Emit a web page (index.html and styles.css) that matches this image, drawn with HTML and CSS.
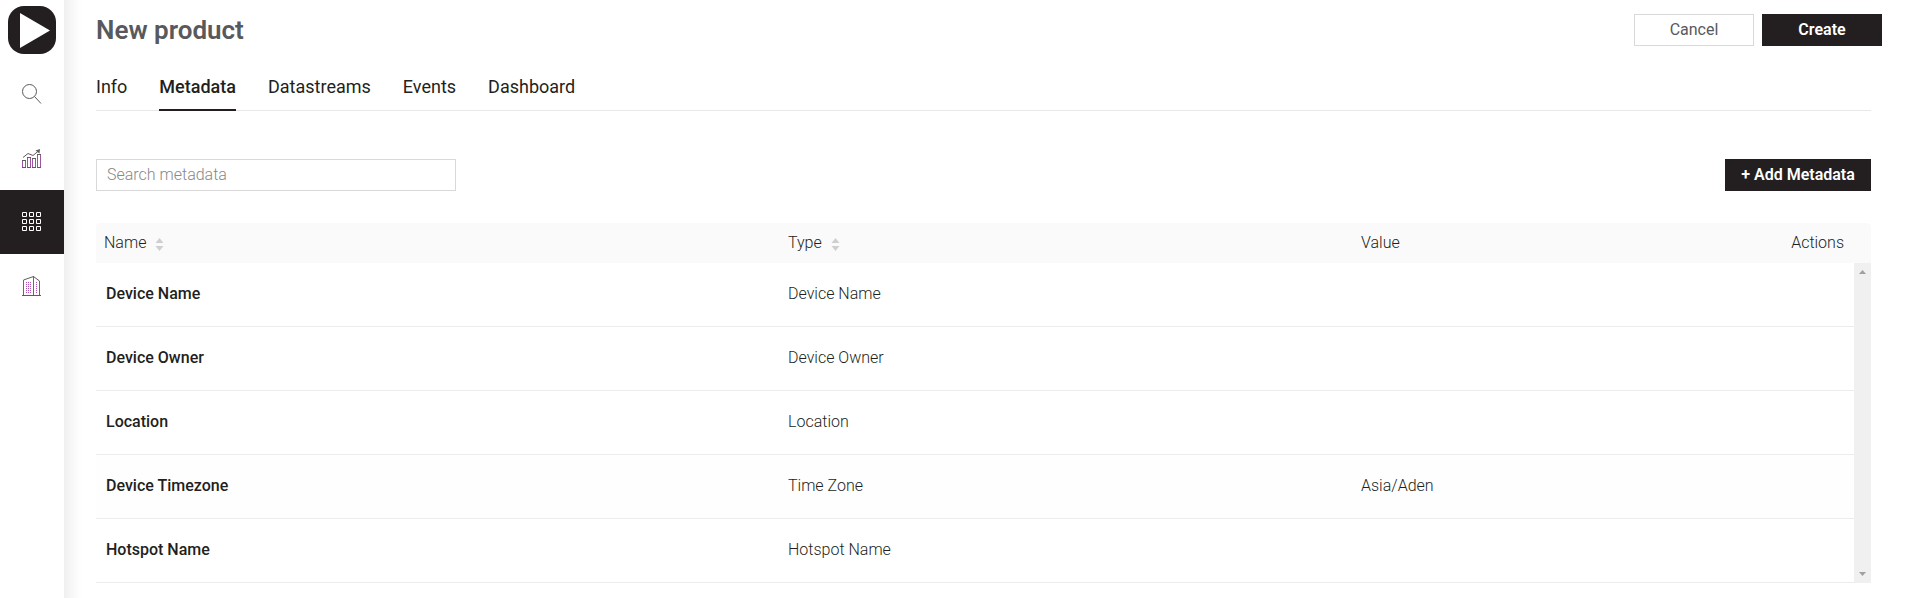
FILE: index.html
```html
<!DOCTYPE html>
<html lang="en">
<head>
<meta charset="utf-8">
<title>New product</title>
<link rel="stylesheet" href="styles.css">
</head>
<body>
<div class="app">
  <nav class="sidebar">
    <a class="logo"><svg width="48" height="48" viewBox="0 0 48 48"><rect width="48" height="48" rx="16" fill="#231f20"/><path d="M12 7L42 24.500 12 42Z" fill="#fff"/></svg></a>
    <a class="nav-item"><svg width="20" height="20" viewBox="0 0 20 20" fill="none" stroke="#5a5660"><circle cx="7.500" cy="7.500" r="7"/><path d="M12.500 12.500L19 19.500"/></svg></a>
    <a class="nav-item"><svg width="20" height="20" viewBox="0 0 20 20" fill="none"><path d="M.5 19V11.500M3.500 11.500V19M5.500 19V8.500M8.500 8.500V19M10.500 19V9.500M13.500 9.500V19M15.500 19V5.500M18.500 5.500V19" stroke="#a052a5"/><path d="M0 18.500h4M5 18.500h4M10 18.500h4M15 18.500h4M0 11.500h4M5 8.500h4M10 9.500h4M15 5.500h4M1 8.500L6 4.500 11 6.500 17 1.500" stroke="#5f5b5f"/><path d="M13.500 1.500L18 0 17.500 4.500Z" fill="#5f5b5f"/></svg></a>
    <a class="nav-item active"><svg width="20" height="20" viewBox="0 0 20 20" fill="none" stroke="#fff"><path d="M.5.500h4v4h-4zM7.500.500h4v4h-4zM14.500.500h4v4h-4zM.5 7.500h4v4h-4zM7.500 7.500h4v4h-4zM14.500 7.500h4v4h-4zM.5 14.500h4v4h-4zM7.500 14.500h4v4h-4zM14.500 14.500h4v4h-4z"/></svg></a>
    <a class="nav-item"><svg width="20" height="20" viewBox="0 0 20 20" fill="none"><path d="M1.500 19V4M11.500 0v19M17.500 19V5" stroke="#7d5a82"/><path d="M0 19.500h19M1.500 4L11.500.500 17.500 5" stroke="#5f5b5f"/><path d="M4.500 6v11M6.500 6v11M8.500 6v11M14.500 6v11" stroke="#b052b5" stroke-dasharray="1 1"/></svg></a>
  </nav>
  <main class="main">
    <header class="header">
      <h1 class="title">New product</h1>
      <div class="header-actions"><button class="btn">Cancel</button><button class="btn primary">Create</button></div>
    </header>
    <div class="tabs">
      <a class="tab">Info</a><a class="tab selected">Metadata</a><a class="tab">Datastreams</a><a class="tab">Events</a><a class="tab">Dashboard</a>
    </div>
    <div class="toolbar">
      <input class="search" placeholder="Search metadata">
      <button class="btn primary add">+ Add Metadata</button>
    </div>
    <section class="table">
      <div class="thead">
        <div class="cell name">Name<svg class="sorter" width="9" height="13" viewBox="0 0 9 13"><path d="M4.500 0L8.500 5h-8zM.5 8h8l-4 5z"/></svg></div>
        <div class="cell">Type<svg class="sorter" width="9" height="13" viewBox="0 0 9 13"><path d="M4.500 0L8.500 5h-8zM.5 8h8l-4 5z"/></svg></div>
        <div class="cell">Value</div>
        <div class="cell actions">Actions</div>
      </div>
      <div class="tbody">
        <div class="rows">
          <div class="row"><div class="cell name">Device Name</div><div class="cell">Device Name</div><div class="cell"></div></div>
          <div class="row"><div class="cell name">Device Owner</div><div class="cell">Device Owner</div><div class="cell"></div></div>
          <div class="row"><div class="cell name">Location</div><div class="cell">Location</div><div class="cell"></div></div>
          <div class="row shaded"><div class="cell name">Device Timezone</div><div class="cell">Time Zone</div><div class="cell">Asia/Aden</div></div>
          <div class="row"><div class="cell name">Hotspot Name</div><div class="cell">Hotspot Name</div><div class="cell"></div></div>
        </div>
        <div class="scrollbar">
          <svg width="7" height="4" viewBox="0 0 7 4"><path d="M3.500 0L7 4H0z"/></svg>
          <svg width="7" height="4" viewBox="0 0 7 4"><path d="M0 0h7L3.500 4z"/></svg>
        </div>
      </div>
    </section>
  </main>
</div>
</body>
</html>
```
FILE: styles.css
```css
* { box-sizing: border-box; }
body { margin: 0; background: #fff; font: 300 16px/24px Roboto, sans-serif; color: #231f20; overflow: hidden; }
.app { display: flex; height: 598px; }
.sidebar { width: 64px; flex: none; background: #fff; display: flex; flex-direction: column; align-items: center; }
.logo { display: block; height: 48px; margin: 6px 0 8px; }
.logo svg { display: block; }
.nav-item { width: 64px; height: 64px; padding: 22px; }
.nav-item svg { display: block; }
.nav-item:nth-child(3) { margin-top: 1px; }
.nav-item.active { background: #231f20; margin-top: -1px; }
.main { flex: 1; min-width: 0; padding: 14px 38px 0 32px; background: linear-gradient(90deg, #f0f0f0, #fefefe 16px, #fff 20px) no-repeat; }
.header { display: flex; justify-content: space-between; height: 56px; }
.title { margin: 0; font-size: 26px; line-height: 32px; font-weight: 600; color: #58595d; }
.header-actions { display: flex; gap: 8px; }
.btn { width: 120px; height: 32px; padding: 0; border: 1px solid #d9d9d9; background: #fff; font: 400 16px/28px Roboto, sans-serif; color: #58595d; }
.btn.primary { background: #231f20; border-color: #231f20; color: #fff; font-weight: 600; }
.tabs { display: flex; gap: 32px; height: 41px; margin-right: 11px; border-bottom: 1px solid #e8e8e8; font-size: 18px; line-height: 34px; font-weight: 400; }
.tab { height: 41px; }
.tab.selected { font-weight: 500; border-bottom: 2px solid #231f20; }
.toolbar { display: flex; justify-content: space-between; margin: 48px 11px 32px 0; }
.search { width: 360px; height: 32px; padding: 0 10px 2px; border: 1px solid #d9d9d9; font: 300 16px Roboto, sans-serif; }
.search::placeholder { color: #888; }
.add { width: 146px; }
.table { margin-right: 11px; }
.thead, .row { display: grid; grid-template-columns: 692px 573px 1fr auto; align-items: center; }
.thead { height: 40px; background: #fafafa; border-radius: 4px 4px 0 0; }
.thead .name { padding-left: 8px; }
.sorter { margin-left: 9px; vertical-align: -3px; fill: #cfcfcf; }
.actions { padding-right: 27px; }
.tbody { display: flex; height: 320px; }
.rows { flex: 1; }
.row { height: 64px; border-bottom: 1px solid #ececec; padding-bottom: 1px; }
.row.shaded { background: #fefefe; }
.row .name { padding-left: 10px; font-weight: 500; }
.scrollbar { width: 17px; background: #f0f0f0; display: flex; flex-direction: column; justify-content: space-between; align-items: center; padding: 7px 0; fill: #a0a0a0; }
```
